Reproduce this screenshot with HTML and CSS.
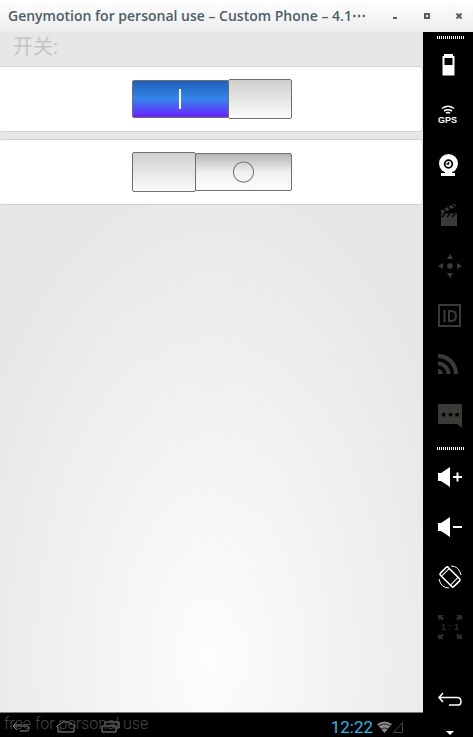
FILE: index.html
```
<!DOCTYPE html>
<html lang="zh">
<head>
<meta charset="utf-8">
<meta name="viewport" content="width=device-width, initial-scale=1">
<title>Genymotion</title>
<link rel="stylesheet" href="styles.css">
</head>
<body>
<header class="titlebar">
  <h1 class="title">Genymotion for personal use – Custom Phone – 4.1⋯</h1>
  <div class="window-buttons">
    <button type="button" aria-label="Minimize"><svg width="8" height="8" viewBox="0 0 8 8"><path d="M2 5h4v2H2z"/></svg></button>
    <button type="button" aria-label="Maximize"><svg width="8" height="8" viewBox="0 0 8 8"><path fill-rule="evenodd" d="M1 1h6v6H1zM3 3v2h2V3z"/></svg></button>
    <button type="button" aria-label="Close"><svg width="8" height="8" viewBox="0 0 8 8"><path d="M1.500 1.500l5 5m0-5l-5 5" fill="none" stroke="currentColor" stroke-width="2"/></svg></button>
  </div>
</header>
<div class="emulator">
  <div class="device">
    <main class="screen">
      <h2 class="heading">开关:</h2>
      <div class="card"><input class="switch" type="checkbox" role="switch" aria-label="开关 1" checked></div>
      <div class="card"><input class="switch" type="checkbox" role="switch" aria-label="开关 2"></div>
    </main>
    <footer class="navbar">
      <div class="nav-keys">
        <button type="button" aria-label="Back"><svg width="20" height="14" viewBox="0 0 20 14"><path d="M6 2L2 6l4 4M2 6h14q2 0 2 2.500T16 11H9"/></svg></button>
        <button type="button" aria-label="Home"><svg width="20" height="14" viewBox="0 0 20 14"><path d="M1 6l6-4h6l6 4v1h-1v5H2V7H1z"/></svg></button>
        <button type="button" aria-label="Recent apps"><svg width="20" height="14" viewBox="0 0 20 14"><path d="M1 6h14v6H1zM4 5V2h14v6h-2"/></svg></button>
      </div>
      <span class="watermark">free for personal use</span>
      <div class="status">
        <time class="clock">12:22</time>
        <svg width="15" height="12" viewBox="0 0 15 12"><path d="M0 3Q7.500-2 15 3L7.500 12z" fill="#888"/><path d="M1.500 5Q7.500 1 13.500 5M4 8q3.500-2 7 0" fill="none" stroke="#000" stroke-width=".7"/></svg>
        <svg width="10" height="12" viewBox="0 0 10 12"><path d="M.5 11.500h9V1.500z" fill="none" stroke="#444"/></svg>
      </div>
    </footer>
  </div>
  <aside class="toolbar">
    <div class="grip"></div>
    <div class="tools">
      <button type="button" aria-label="Battery"><svg viewBox="0 0 50 50"><path fill-rule="evenodd" d="M21 14h9v2h1.500v19.500h-12V16H21zM21.500 18v7h8v-7z"/></svg></button>
      <button type="button" aria-label="GPS"><svg viewBox="0 0 50 50"><path d="M19 18.500q6-4.500 12 0M21 21q4-2.500 8 0M23 23q2-1 4 0" fill="none" stroke="currentColor" stroke-width="1.500"/><text x="24.500" y="33" class="gps">GPS</text></svg></button>
      <button type="button" aria-label="Camera"><svg viewBox="0 0 50 50"><circle cx="25.500" cy="23.500" r="9.500"/><path d="M22 31h7v2h3v3H18v-3h4z"/><circle cx="25.500" cy="24" r="3.800" fill="none" stroke="#000" stroke-width="1.800"/><path d="M25.500 22v2h-2" fill="none" stroke="#000" stroke-width="1.500"/></svg></button>
      <button type="button" class="off" aria-label="Screencast"><svg viewBox="0 0 50 50"><path d="M18 23.500h16V36H18zM17.500 20.500l14-7 1.500 3-14 7z"/><path d="M19 27l3-3m2 3l3-3m2 3l3-3M20 18.500l3 3m1.500-5l3 3m1.500-5l3 3" stroke="#000" stroke-width="1.500"/></svg></button>
      <button type="button" class="off" aria-label="Remote control"><svg viewBox="0 0 50 50"><circle cx="27" cy="26" r="2.800"/><path d="M24 19l3-5 3 5zM24 33l3 5 3-5zM20 23l-5 3 5 3zM34 23l5 3-5 3z"/></svg></button>
      <button type="button" class="off" aria-label="Identifiers"><svg viewBox="0 0 50 50"><path d="M16 15h21v21H16z" class="line"/><path d="M21.500 20v12M26 21v10h2q5 0 5-5t-5-5z" class="line"/></svg></button>
      <button type="button" class="off" aria-label="Network"><svg viewBox="0 0 50 50"><path d="M15 16a18 18 0 0 1 18 18M15 23.500A10.500 10.500 0 0 1 25.500 34" fill="none" stroke="currentColor" stroke-width="4"/><path d="M15 29a5 5 0 0 1 5 5H15z"/></svg></button>
      <button type="button" class="off" aria-label="Messages"><svg viewBox="0 0 50 50"><path d="M15 14h24v24l-5-4H15z"/><g fill="#000"><circle cx="20.500" cy="24.700" r="1.900"/><circle cx="27.500" cy="24.700" r="1.900"/><circle cx="34" cy="24.700" r="1.900"/></g></svg></button>
    </div>
    <div class="grip"></div>
    <div class="tools volume">
      <button type="button" aria-label="Volume up"><svg viewBox="0 0 50 50"><path d="M15 21h3l9-6v20l-9-6h-3zM30 24h9v2h-9zM33.500 20.500h2v9h-2z"/></svg></button>
      <button type="button" aria-label="Volume down"><svg viewBox="0 0 50 50"><path d="M15 21h3l9-6v20l-9-6h-3zM30 24h9v2h-9z"/></svg></button>
      <button type="button" aria-label="Rotate"><svg viewBox="0 0 50 50"><g transform="rotate(-45 27 25)"><rect x="21.500" y="15.500" width="11" height="19" rx="1.500" fill="none" stroke="currentColor" stroke-width="1.600"/><path d="M22 18.500h10M22 31h10" class="thin"/></g><path d="M28 14q8 0 10 9M26 36q-8 0-10-9" class="thin"/></svg></button>
      <button type="button" class="dim" aria-label="Pixel perfect"><svg viewBox="0 0 50 50"><path d="M15 13h6l-2 1.500 2 2-2 2-2-2L15 18.500zM39 13h-6l2 1.500-2 2 2 2 2-2L39 18.500zM15 37h6l-2-1.500 2-2-2-2-2 2L15 31.500zM39 37h-6l2-1.500-2-2 2-2 2 2L39 31.500z"/><text x="27" y="28" class="ratio">1 : 1</text></svg></button>
    </div>
    <div class="bottom-tools">
      <button type="button" aria-label="Back"><svg width="26" height="16" viewBox="0 0 26 16"><path d="M6 1L2 5.500 6 10M2 5.500h18q4 0 4 4t-4 3.500h-8" fill="none" stroke="currentColor" stroke-width="1.500"/></svg></button>
      <button type="button" aria-label="More"><svg width="8" height="4" viewBox="0 0 8 4"><path d="M0 0h8L4 4z"/></svg></button>
    </div>
  </aside>
</div>
</body>
</html>
```
FILE: styles.css
```
*,
*::before,
*::after { box-sizing: border-box; }

body {
  margin: 0;
  min-height: 100vh;
  display: flex;
  flex-direction: column;
  background: #000;
  font-family: Roboto, "Noto Sans CJK SC", sans-serif;
}

button {
  margin: 0;
  padding: 0;
  border: 0;
  background: none;
  color: inherit;
  display: flex;
  align-items: center;
  justify-content: center;
}

svg { display: block; fill: currentColor; }

.titlebar {
  height: 32px;
  display: flex;
  align-items: center;
  justify-content: space-between;
  padding: 0 10px 0 8px;
  background: linear-gradient(#fff, #ececec);
  color: #4d6066;
}

.title {
  margin: 0;
  font: 600 14px/20px "Open Sans", "Noto Sans", sans-serif;
  white-space: nowrap;
}

.window-buttons { display: flex; gap: 24px; }

.emulator { flex: 1; display: flex; }

.device {
  flex: 1;
  min-width: 0;
  display: flex;
  flex-direction: column;
}

.screen {
  flex: 1;
  display: flex;
  flex-direction: column;
  gap: 7px;
  background: radial-gradient(260px 480px at 50% 92%, #fdfdfd, #e7e7e7);
}

.heading {
  margin: 0 0 -3px;
  padding-left: 13px;
  font: 400 20px/30px Roboto, "Noto Sans CJK SC", sans-serif;
  color: #c4c4c4;
}

.card {
  height: 66px;
  display: flex;
  align-items: center;
  justify-content: center;
  border: 1px solid #d2d2d2;
  border-left-color: #fff;
  border-radius: 3px;
  background: #fff;
}

.switch {
  appearance: none;
  width: 160px;
  height: 40px;
  margin: 0;
  display: flex;
  align-items: center;
}

.switch::before,
.switch::after {
  content: "";
  border: 1px solid #707070;
}

.switch::before {
  flex: 1;
  height: 38px;
  border-radius: 2px;
  background:
    radial-gradient(circle at 50% 50%, transparent 9px, #707070 10px, transparent 11px),
    linear-gradient(#b4b4b4, #f0f0f0 50%, #fcfcfc);
}

.switch::after {
  width: 64px;
  height: 40px;
  margin-right: -1px;
  order: -1;
  border-radius: 2px;
  background: linear-gradient(#cfcfcf, #fbfbfb);
}

.switch:checked::before {
  background:
    linear-gradient(#fff, #fff) center / 2px 20px no-repeat,
    linear-gradient(#2060b8, #3585ea 50%, #6a20ff);
}

.switch:checked::after {
  order: 1;
  margin: 0 0 0 -1px;
}

.navbar {
  position: relative;
  height: 25px;
  display: flex;
  justify-content: space-between;
  align-items: center;
  padding: 3px 20px 0 11px;
  border-top: 1px solid #777;
  background: #000;
  color: #8a8a8a;
}

.nav-keys { display: flex; gap: 25px; }

.nav-keys svg { fill: none; stroke: currentColor; }

.watermark {
  position: absolute;
  left: 4px;
  top: 1px;
  font: 300 16px/20px Roboto, sans-serif;
  color: #484848;
  white-space: nowrap;
}

.status { display: flex; align-items: center; gap: 4px; }

.status svg + svg { margin-left: -3px; }

.clock { font-size: 17px; line-height: 20px; color: #33b5e5; }

.toolbar {
  width: 50px;
  display: flex;
  flex-direction: column;
  padding: 4px 0 2px;
  background: #000;
  color: #fff;
}

.grip {
  width: 27px;
  height: 3px;
  margin: 0 0 1px 14px;
  background: repeating-linear-gradient(90deg, #fff 0 1px, #000 1px 2px);
}

.tools + .grip { margin-top: 7px; }

.tools button { width: 50px; height: 50px; }

.tools svg { width: 50px; height: 50px; }

.volume { padding-top: 1px; }

.off { color: #3b3a36; }

.dim { color: #2e2d29; }

.line { fill: none; stroke: currentColor; stroke-width: 2; }

.thin { fill: none; stroke: currentColor; stroke-width: 1; }

.gps {
  font: 700 9px "Liberation Sans", sans-serif;
  text-anchor: middle;
}

.ratio {
  font: 700 9px "Liberation Sans", sans-serif;
  text-anchor: middle;
}

.bottom-tools {
  margin-top: auto;
  display: flex;
  flex-direction: column;
  align-items: center;
  gap: 23px;
  padding-left: 4px;
}
```
